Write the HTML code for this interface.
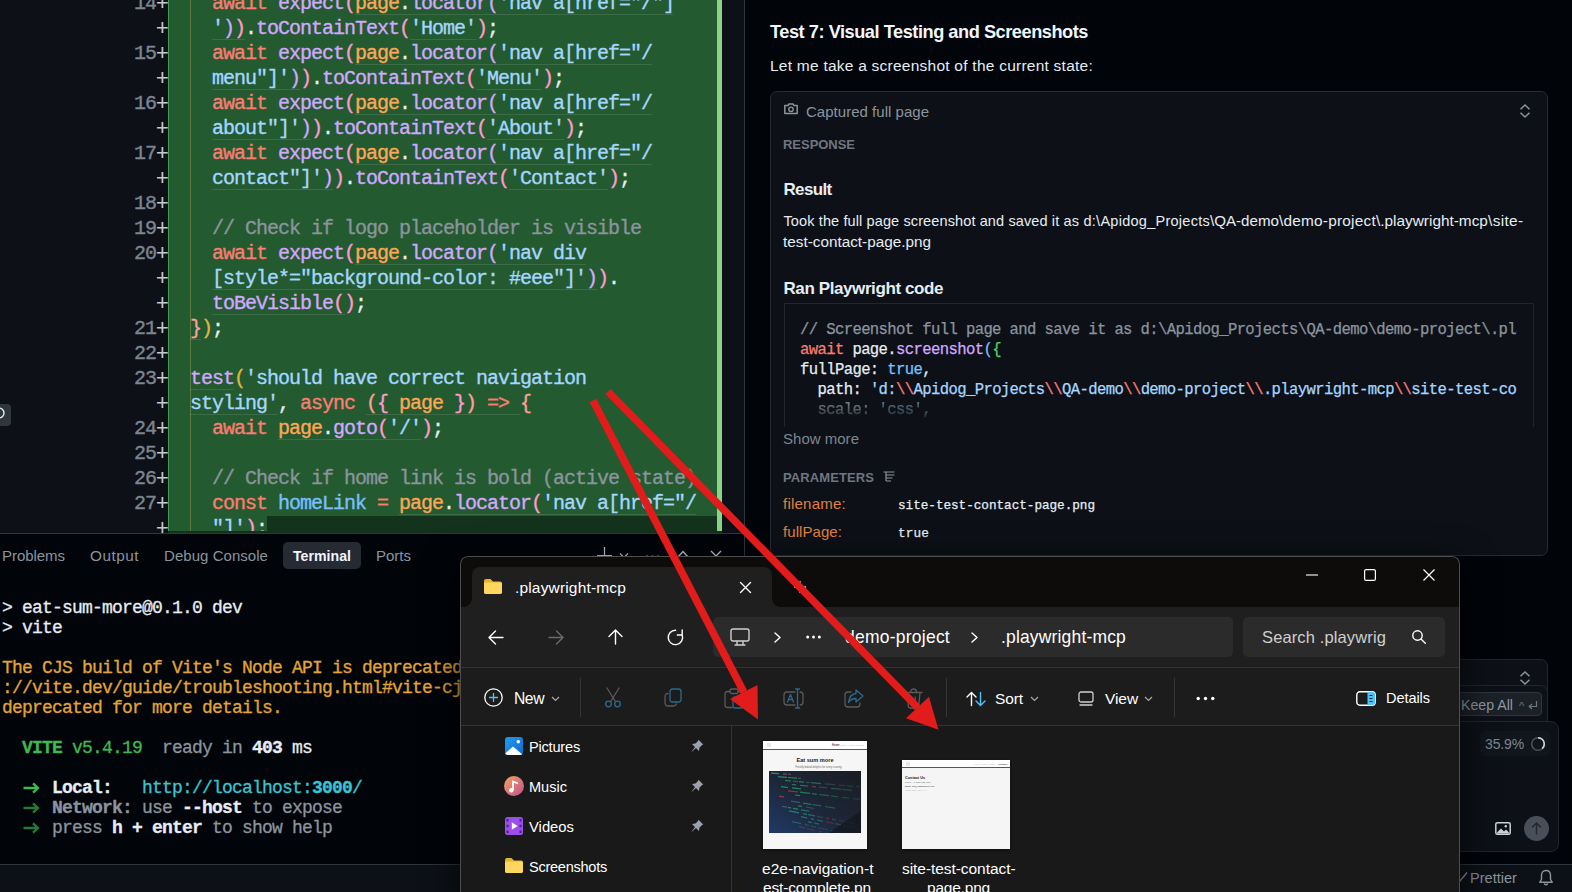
<!DOCTYPE html>
<html lang="en"><head><meta charset="utf-8"><title>Editor</title>
<style>

*{box-sizing:border-box;margin:0;padding:0}
html,body{width:1572px;height:892px;overflow:hidden;background:#010409}
body{position:relative;font-family:"Liberation Sans",sans-serif}
.t{position:absolute;white-space:pre;display:block}
.a{position:absolute}
.code{font:400 20px/25px "Liberation Mono",monospace;letter-spacing:-1.002px;white-space:pre;color:#e6edf3;-webkit-text-stroke:.35px currentColor;margin-top:1px}
.term{font:400 18px/20px "Liberation Mono",monospace;letter-spacing:-.802px;white-space:pre;color:#e6edf3;-webkit-text-stroke:.3px currentColor;margin-top:1px}
.cc{font:400 15.6px/20px "Liberation Mono",monospace;letter-spacing:-.625px;white-space:pre;color:#e6edf3;-webkit-text-stroke:.25px currentColor;margin-top:1px}
b{font-weight:700}
.pl{display:inline-block;width:11px;letter-spacing:0;margin-left:1px;font-size:22px;line-height:20px;-webkit-text-stroke:0;color:#c3cad2;text-indent:-1.2px;vertical-align:-1px}
svg{position:absolute;overflow:visible}

</style></head>
<body>
<div class="a" style="left:0;top:0;width:744px;height:533px;background:#0d1117;overflow:hidden">
<div class="a" style="left:168px;top:0;width:549px;height:532px;background:#235a30"></div>
<div class="a" style="left:168px;top:0;width:1px;height:532px;background:#3f9c55"></div>
<div class="a" style="left:717px;top:0;width:5px;height:532px;background:#8bd485"></div>
<div class="a" style="left:190px;top:0;width:1px;height:532px;background:#5d7d3f"></div>
<div class="a code" style="left:60px;width:108px;top:-10px;text-align:right"><span style="color:#7d8590">14</span><span class="pl">+</span></div><div class="a code" style="left:212px;top:-10px"><span style="color:#ff7b72">await</span><span style="color:#e6edf3"> </span><span style="color:#d2a8ff">expect</span><span style="color:#ff9bce">(</span><span style="color:#ffa657">page</span><span style="color:#e6edf3">.</span><span style="color:#d2a8ff">locator</span><span style="color:#d2a8ff">(</span><span style="color:#a5d6ff">'nav a[href=&quot;/&quot;]</span></div>
<div class="a code" style="left:60px;width:108px;top:15px;text-align:right"><span class="pl">+</span></div><div class="a code" style="left:212px;top:15px"><span style="color:#a5d6ff">'</span><span style="color:#d2a8ff">)</span><span style="color:#ff9bce">)</span><span style="color:#e6edf3">.</span><span style="color:#d2a8ff">toContainText</span><span style="color:#ff9bce">(</span><span style="color:#a5d6ff">'Home'</span><span style="color:#ff9bce">)</span><span style="color:#e6edf3">;</span></div>
<div class="a code" style="left:60px;width:108px;top:40px;text-align:right"><span style="color:#7d8590">15</span><span class="pl">+</span></div><div class="a code" style="left:212px;top:40px"><span style="color:#ff7b72">await</span><span style="color:#e6edf3"> </span><span style="color:#d2a8ff">expect</span><span style="color:#ff9bce">(</span><span style="color:#ffa657">page</span><span style="color:#e6edf3">.</span><span style="color:#d2a8ff">locator</span><span style="color:#d2a8ff">(</span><span style="color:#a5d6ff">'nav a[href=&quot;/</span></div>
<div class="a code" style="left:60px;width:108px;top:65px;text-align:right"><span class="pl">+</span></div><div class="a code" style="left:212px;top:65px"><span style="color:#a5d6ff">menu&quot;]'</span><span style="color:#d2a8ff">)</span><span style="color:#ff9bce">)</span><span style="color:#e6edf3">.</span><span style="color:#d2a8ff">toContainText</span><span style="color:#ff9bce">(</span><span style="color:#a5d6ff">'Menu'</span><span style="color:#ff9bce">)</span><span style="color:#e6edf3">;</span></div>
<div class="a code" style="left:60px;width:108px;top:90px;text-align:right"><span style="color:#7d8590">16</span><span class="pl">+</span></div><div class="a code" style="left:212px;top:90px"><span style="color:#ff7b72">await</span><span style="color:#e6edf3"> </span><span style="color:#d2a8ff">expect</span><span style="color:#ff9bce">(</span><span style="color:#ffa657">page</span><span style="color:#e6edf3">.</span><span style="color:#d2a8ff">locator</span><span style="color:#d2a8ff">(</span><span style="color:#a5d6ff">'nav a[href=&quot;/</span></div>
<div class="a code" style="left:60px;width:108px;top:115px;text-align:right"><span class="pl">+</span></div><div class="a code" style="left:212px;top:115px"><span style="color:#a5d6ff">about&quot;]'</span><span style="color:#d2a8ff">)</span><span style="color:#ff9bce">)</span><span style="color:#e6edf3">.</span><span style="color:#d2a8ff">toContainText</span><span style="color:#ff9bce">(</span><span style="color:#a5d6ff">'About'</span><span style="color:#ff9bce">)</span><span style="color:#e6edf3">;</span></div>
<div class="a code" style="left:60px;width:108px;top:140px;text-align:right"><span style="color:#7d8590">17</span><span class="pl">+</span></div><div class="a code" style="left:212px;top:140px"><span style="color:#ff7b72">await</span><span style="color:#e6edf3"> </span><span style="color:#d2a8ff">expect</span><span style="color:#ff9bce">(</span><span style="color:#ffa657">page</span><span style="color:#e6edf3">.</span><span style="color:#d2a8ff">locator</span><span style="color:#d2a8ff">(</span><span style="color:#a5d6ff">'nav a[href=&quot;/</span></div>
<div class="a code" style="left:60px;width:108px;top:165px;text-align:right"><span class="pl">+</span></div><div class="a code" style="left:212px;top:165px"><span style="color:#a5d6ff">contact&quot;]'</span><span style="color:#d2a8ff">)</span><span style="color:#ff9bce">)</span><span style="color:#e6edf3">.</span><span style="color:#d2a8ff">toContainText</span><span style="color:#ff9bce">(</span><span style="color:#a5d6ff">'Contact'</span><span style="color:#ff9bce">)</span><span style="color:#e6edf3">;</span></div>
<div class="a code" style="left:60px;width:108px;top:190px;text-align:right"><span style="color:#7d8590">18</span><span class="pl">+</span></div><div class="a code" style="left:60px;width:108px;top:215px;text-align:right"><span style="color:#7d8590">19</span><span class="pl">+</span></div><div class="a code" style="left:212px;top:215px"><span style="color:#8b949e">// Check if logo placeholder is visible</span></div>
<div class="a code" style="left:60px;width:108px;top:240px;text-align:right"><span style="color:#7d8590">20</span><span class="pl">+</span></div><div class="a code" style="left:212px;top:240px"><span style="color:#ff7b72">await</span><span style="color:#e6edf3"> </span><span style="color:#d2a8ff">expect</span><span style="color:#ff9bce">(</span><span style="color:#ffa657">page</span><span style="color:#e6edf3">.</span><span style="color:#d2a8ff">locator</span><span style="color:#d2a8ff">(</span><span style="color:#a5d6ff">'nav div</span></div>
<div class="a code" style="left:60px;width:108px;top:265px;text-align:right"><span class="pl">+</span></div><div class="a code" style="left:212px;top:265px"><span style="color:#a5d6ff">[style*=&quot;background-color: #eee&quot;]'</span><span style="color:#d2a8ff">)</span><span style="color:#ff9bce">)</span><span style="color:#e6edf3">.</span></div>
<div class="a code" style="left:60px;width:108px;top:290px;text-align:right"><span class="pl">+</span></div><div class="a code" style="left:212px;top:290px"><span style="color:#d2a8ff">toBeVisible</span><span style="color:#ff9bce">()</span><span style="color:#e6edf3">;</span></div>
<div class="a code" style="left:60px;width:108px;top:315px;text-align:right"><span style="color:#7d8590">21</span><span class="pl">+</span></div><div class="a code" style="left:190px;top:315px"><span style="color:#ffa198">}</span><span style="color:#e3b341">)</span><span style="color:#e6edf3">;</span></div>
<div class="a code" style="left:60px;width:108px;top:340px;text-align:right"><span style="color:#7d8590">22</span><span class="pl">+</span></div><div class="a code" style="left:60px;width:108px;top:365px;text-align:right"><span style="color:#7d8590">23</span><span class="pl">+</span></div><div class="a code" style="left:190px;top:365px"><span style="color:#d2a8ff">test</span><span style="color:#e3b341">(</span><span style="color:#a5d6ff">'should have correct navigation</span></div>
<div class="a code" style="left:60px;width:108px;top:390px;text-align:right"><span class="pl">+</span></div><div class="a code" style="left:190px;top:390px"><span style="color:#a5d6ff">styling'</span><span style="color:#e6edf3">, </span><span style="color:#ff7b72">async</span><span style="color:#e6edf3"> </span><span style="color:#ffa198">(</span><span style="color:#ff9bce">{</span><span style="color:#ffa657"> page </span><span style="color:#ff9bce">}</span><span style="color:#ffa198">)</span><span style="color:#ff7b72"> =&gt;</span><span style="color:#e6edf3"> </span><span style="color:#ffa198">{</span></div>
<div class="a code" style="left:60px;width:108px;top:415px;text-align:right"><span style="color:#7d8590">24</span><span class="pl">+</span></div><div class="a code" style="left:212px;top:415px"><span style="color:#ff7b72">await</span><span style="color:#e6edf3"> </span><span style="color:#ffa657">page</span><span style="color:#e6edf3">.</span><span style="color:#d2a8ff">goto</span><span style="color:#ff9bce">(</span><span style="color:#a5d6ff">'/'</span><span style="color:#ff9bce">)</span><span style="color:#e6edf3">;</span></div>
<div class="a code" style="left:60px;width:108px;top:440px;text-align:right"><span style="color:#7d8590">25</span><span class="pl">+</span></div><div class="a code" style="left:60px;width:108px;top:465px;text-align:right"><span style="color:#7d8590">26</span><span class="pl">+</span></div><div class="a code" style="left:212px;top:465px"><span style="color:#8b949e">// Check if home link is bold (active state)</span></div>
<div class="a code" style="left:60px;width:108px;top:490px;text-align:right"><span style="color:#7d8590">27</span><span class="pl">+</span></div><div class="a code" style="left:212px;top:490px"><span style="color:#ff7b72">const</span><span style="color:#e6edf3"> </span><span style="color:#79c0ff">homeLink</span><span style="color:#e6edf3"> </span><span style="color:#ff7b72">=</span><span style="color:#e6edf3"> </span><span style="color:#ffa657">page</span><span style="color:#e6edf3">.</span><span style="color:#d2a8ff">locator</span><span style="color:#ff9bce">(</span><span style="color:#a5d6ff">'nav a[href=&quot;/</span></div>
<div class="a code" style="left:60px;width:108px;top:515px;text-align:right"><span class="pl">+</span></div><div class="a code" style="left:212px;top:515px"><span style="color:#a5d6ff">&quot;]'</span><span style="color:#ff9bce">)</span><span style="color:#e6edf3">;</span></div>
<div class="a" style="left:355px;top:14px;width:318px;height:1px;background:rgba(255,255,255,.11)"></div><div class="a" style="left:212px;top:39px;width:33px;height:1px;background:rgba(255,255,255,.11)"></div><div class="a" style="left:410px;top:39px;width:66px;height:1px;background:rgba(255,255,255,.11)"></div><div class="a" style="left:355px;top:64px;width:297px;height:1px;background:rgba(255,255,255,.11)"></div><div class="a" style="left:212px;top:89px;width:88px;height:1px;background:rgba(255,255,255,.11)"></div><div class="a" style="left:476px;top:89px;width:66px;height:1px;background:rgba(255,255,255,.11)"></div><div class="a" style="left:355px;top:114px;width:297px;height:1px;background:rgba(255,255,255,.11)"></div><div class="a" style="left:212px;top:139px;width:99px;height:1px;background:rgba(255,255,255,.11)"></div><div class="a" style="left:487px;top:139px;width:77px;height:1px;background:rgba(255,255,255,.11)"></div><div class="a" style="left:355px;top:164px;width:297px;height:1px;background:rgba(255,255,255,.11)"></div><div class="a" style="left:212px;top:189px;width:121px;height:1px;background:rgba(255,255,255,.11)"></div><div class="a" style="left:509px;top:189px;width:99px;height:1px;background:rgba(255,255,255,.11)"></div><div class="a" style="left:355px;top:264px;width:231px;height:1px;background:rgba(255,255,255,.11)"></div><div class="a" style="left:212px;top:289px;width:385px;height:1px;background:rgba(255,255,255,.11)"></div><div class="a" style="left:212px;top:314px;width:133px;height:1px;background:rgba(255,255,255,.11)"></div><div class="a" style="left:190px;top:389px;width:44px;height:1px;background:rgba(255,255,255,.11)"></div><div class="a" style="left:190px;top:414px;width:88px;height:1px;background:rgba(255,255,255,.11)"></div><div class="a" style="left:366px;top:414px;width:154px;height:1px;background:rgba(255,255,255,.11)"></div><div class="a" style="left:278px;top:439px;width:143px;height:1px;background:rgba(255,255,255,.11)"></div><div class="a" style="left:399px;top:514px;width:297px;height:1px;background:rgba(255,255,255,.11)"></div><div class="a" style="left:190px;top:339px;width:11px;height:1px;background:rgba(255,255,255,.11)"></div>
<div class="a" style="left:267px;top:516px;width:450px;height:16px;background:rgba(10,20,14,.55)"></div>
<div class="a" style="left:168px;top:531px;width:554px;height:2px;background:#15301f"></div>
<div class="a" style="left:-4px;top:404px;width:15px;height:22px;border-radius:4px;background:#30363d"></div><svg style="left:0;top:404px" width="11" height="22"><circle cx="-1" cy="9" r="5" fill="none" stroke="#e6edf3" stroke-width="1.4"/></svg>
</div>
<div class="a" style="left:744px;top:0;width:1px;height:892px;background:#30363d"></div>
<div class="a" style="left:0;top:533px;width:744px;height:332px;background:#010409;border-top:1px solid #30363d;overflow:hidden"></div>
<div class="a" style="left:283px;top:542px;width:78px;height:27px;border-radius:5px;background:#262b33"></div>
<span class="t" style='left:2px;top:545.5px;font:400 15px/20px "Liberation Sans", sans-serif;color:#8b949e;letter-spacing:-0.045px;'>Problems</span><span class="t" style='left:90px;top:545.5px;font:400 15.3px/20px "Liberation Sans", sans-serif;color:#8b949e;letter-spacing:0.513px;'>Output</span><span class="t" style='left:164px;top:545.5px;font:400 15px/20px "Liberation Sans", sans-serif;color:#8b949e;letter-spacing:0.046px;'>Debug Console</span><span class="t" style='left:293px;top:546.5px;font:700 14.17px/18px "Liberation Sans", sans-serif;color:#f0f6fc;letter-spacing:0.000px;'>Terminal</span><span class="t" style='left:376px;top:545.5px;font:400 15px/20px "Liberation Sans", sans-serif;color:#8b949e;letter-spacing:-0.003px;'>Ports</span><div class="a term" style="left:2px;top:597px;width:458px;overflow:hidden">&gt; eat-sum-more@0.1.0 dev</div>
<div class="a term" style="left:2px;top:617px;width:458px;overflow:hidden">&gt; vite</div>
<div class="a term" style="left:2px;top:657px;width:458px;overflow:hidden"><span style="color:#e3a536">The CJS build of Vite's Node API is deprecated. See https</span></div>
<div class="a term" style="left:2px;top:677px;width:458px;overflow:hidden"><span style="color:#e3a536">://vite.dev/guide/troubleshooting.html#vite-cjs-node-api-</span></div>
<div class="a term" style="left:2px;top:697px;width:458px;overflow:hidden"><span style="color:#e3a536">deprecated for more details.</span></div>
<div class="a term" style="left:2px;top:737px;width:458px;overflow:hidden">  <b style="color:#3fb950">VITE</b><span style="color:#3fb950"> v5.4.19</span>  <span style="color:#8b949e">ready in</span> <b>403</b> ms</div>
<svg style="left:23px;top:782px" width="17" height="12" viewBox="0 0 17 12"><path d="M0.5 6H14.5M10 1.3L15 6L10 10.7" stroke="#3fb950" stroke-width="2.3" fill="none"/></svg>
<svg style="left:23px;top:802px" width="17" height="12" viewBox="0 0 17 12"><path d="M0.5 6H14.5M10 1.3L15 6L10 10.7" stroke="#277a35" stroke-width="2.3" fill="none"/></svg>
<svg style="left:23px;top:822px" width="17" height="12" viewBox="0 0 17 12"><path d="M0.5 6H14.5M10 1.3L15 6L10 10.7" stroke="#277a35" stroke-width="2.3" fill="none"/></svg>
<div class="a term" style="left:2px;top:777px;width:458px;overflow:hidden">  <span style="color:#3fb950;opacity:0">→</span>  <b>Local:</b>   <span style="color:#39c5cf">http://localhost:<b>3000</b>/</span></div>
<div class="a term" style="left:2px;top:797px;width:458px;overflow:hidden">  <span style="color:#3fb950;opacity:0">→</span>  <b style="color:#8b949e">Network:</b><span style="color:#8b949e"> use </span><b>--host</b><span style="color:#8b949e"> to expose</span></div>
<div class="a term" style="left:2px;top:817px;width:458px;overflow:hidden">  <span style="color:#3fb950;opacity:0">→</span>  <span style="color:#8b949e">press </span><b>h + enter</b><span style="color:#8b949e"> to show help</span></div>
<svg style="left:596px;top:546px" width="17" height="17" viewBox="0 0 17 17"><path d="M8.5 1V16M1 9.5H16" stroke="#c9d1d9" stroke-width="1.2" fill="none"/></svg>
<svg style="left:619px;top:553px" width="10" height="6" viewBox="0 0 10 6"><path d="M1 0.5L5 4.5L9 0.5" stroke="#c9d1d9" stroke-width="1.2" fill="none"/></svg>
<svg style="left:645px;top:554.5px" width="15" height="4" viewBox="0 0 15 4"><circle cx="2" cy="2" r="1.4" fill="#c9d1d9"/><circle cx="7.5" cy="2" r="1.4" fill="#c9d1d9"/><circle cx="13" cy="2" r="1.4" fill="#c9d1d9"/></svg>
<svg style="left:677px;top:550px" width="12" height="8" viewBox="0 0 12 8"><path d="M1 7L6 1.5L11 7" stroke="#c9d1d9" stroke-width="1.4" fill="none"/></svg>
<svg style="left:710px;top:550px" width="12" height="12" viewBox="0 0 12 12"><path d="M1 1L11 11M11 1L1 11" stroke="#c9d1d9" stroke-width="1.4" fill="none"/></svg>
<div class="a" style="left:0;top:864px;width:1572px;height:28px;background:#0d1117;border-top:1px solid #30363d"></div>
<span class="t" style='left:770px;top:19.5px;font:700 18.2px/24px "Liberation Sans", sans-serif;color:#f0f6fc;letter-spacing:-0.462px;'>Test 7: Visual Testing and Screenshots</span><span class="t" style='left:770px;top:55.5px;font:400 15.5px/20px "Liberation Sans", sans-serif;color:#e6edf3;letter-spacing:0.241px;'>Let me take a screenshot of the current state:</span><div class="a" style="left:770px;top:91px;width:778px;height:465px;background:#0d1117;border:1px solid #272c34;border-radius:7px"></div>
<svg style="left:784px;top:103px" width="15" height="12" viewBox="0 0 15 12"><path d="M0.8 2.6H4L5 0.9H9L10 2.6H13.2V10.4H0.8Z" fill="none" stroke="#8b949e" stroke-width="1.5" stroke-linejoin="round"/><circle cx="7" cy="6.3" r="2.2" fill="none" stroke="#8b949e" stroke-width="1.4"/></svg>
<span class="t" style='left:806px;top:101.5px;font:400 15px/20px "Liberation Sans", sans-serif;color:#8b949e;letter-spacing:0.023px;'>Captured full page</span><svg style="left:1519px;top:103.5px" width="12" height="14" viewBox="0 0 12 14"><path d="M1.5 5.2L6 1L10.5 5.2M1.5 8.8L6 13L10.5 8.8" stroke="#8b949e" stroke-width="1.5" fill="none"/></svg>
<span class="t" style='left:783px;top:135.5px;font:700 13px/17px "Liberation Sans", sans-serif;color:#6e7681;letter-spacing:-0.031px;'>RESPONSE</span><span class="t" style='left:783.5px;top:178.5px;font:700 17px/22px "Liberation Sans", sans-serif;color:#e6edf3;letter-spacing:-0.661px;'>Result</span><span class="t" style='left:783.5px;top:211.5px;font:400 14.5px/19px "Liberation Sans", sans-serif;color:#e6edf3;letter-spacing:0.118px;'>Took the full page screenshot and saved it as</span><span class="t" style='left:1083.5px;top:211.5px;font:400 14.5px/19px "Liberation Sans", sans-serif;color:#e6edf3;letter-spacing:0.266px;'>d:\Apidog_Projects</span><span class="t" style='left:1210px;top:211px;font:400 15.14px/20px "Liberation Sans", sans-serif;color:#e6edf3;letter-spacing:0.000px;'>\QA-demo</span><span class="t" style='left:1279px;top:211px;font:400 15.37px/20px "Liberation Sans", sans-serif;color:#e6edf3;letter-spacing:0.233px;'>\demo-project</span><span class="t" style='left:1376px;top:211px;font:400 15.37px/20px "Liberation Sans", sans-serif;color:#e6edf3;letter-spacing:0.006px;'>\.playwright-mcp</span><span class="t" style='left:1488px;top:211px;font:400 15.37px/20px "Liberation Sans", sans-serif;color:#e6edf3;letter-spacing:0.365px;'>\site-</span><span class="t" style='left:783px;top:232px;font:400 15.3px/20px "Liberation Sans", sans-serif;color:#e6edf3;letter-spacing:0.000px;'>test-contact-page.png</span><span class="t" style='left:783.5px;top:277.5px;font:700 17px/22px "Liberation Sans", sans-serif;color:#e6edf3;letter-spacing:-0.405px;'>Ran Playwright code</span><div class="a" style="left:784px;top:303px;width:750px;height:124px;background:#0d1117;border:1px solid #21262d;border-bottom:none;overflow:hidden"><div class="a cc" style="left:15px;top:15px;width:717px;overflow:hidden;opacity:1"><span style="color:#8b949e">// Screenshot full page and save it as d:\Apidog_Projects\QA-demo\demo-project\.playwright-mcp\site-test</span></div><div class="a cc" style="left:15px;top:35px;width:717px;overflow:hidden;opacity:1"><span style="color:#ff7b72">await</span> page.<span style="color:#d2a8ff">screenshot</span><span style="color:#79c0ff">(</span><span style="color:#56d364">{</span></div><div class="a cc" style="left:15px;top:55px;width:717px;overflow:hidden;opacity:1">fullPage: <span style="color:#79c0ff">true</span>,</div><div class="a cc" style="left:15px;top:75px;width:717px;overflow:hidden;opacity:1">  path: <span style="color:#a5d6ff">'d:<span style="color:#ff7b72">\\</span>Apidog_Projects<span style="color:#ff7b72">\\</span>QA-demo<span style="color:#ff7b72">\\</span>demo-project<span style="color:#ff7b72">\\</span>.playwright-mcp<span style="color:#ff7b72">\\</span>site-test-contact-page.png'</span>,</div><div class="a cc" style="left:15px;top:95px;width:717px;overflow:hidden;opacity:0.55">  scale: <span style="color:#a5d6ff">'css'</span>,</div><div class="a cc" style="left:15px;top:115px;width:717px;overflow:hidden;opacity:0.2">  type: <span style="color:#a5d6ff">'png'</span></div><div class="a" style="left:0;top:96px;width:750px;height:28px;background:linear-gradient(rgba(13,17,23,0),#0d1117 85%)"></div></div>
<span class="t" style='left:783px;top:429px;font:400 15px/20px "Liberation Sans", sans-serif;color:#7d8590;letter-spacing:0.014px;'>Show more</span><span class="t" style='left:783px;top:468.5px;font:700 13px/17px "Liberation Sans", sans-serif;color:#6e7681;letter-spacing:0.095px;'>PARAMETERS</span><svg style="left:883px;top:471px" width="12" height="11" viewBox="0 0 12 11"><path d="M0.5 1H11.5M3 4H11.5M3 7H9.5M3 10H8" stroke="#8b949e" stroke-width="1.2" fill="none"/><path d="M3 1V10" stroke="#8b949e" stroke-width="1.2"/></svg>
<span class="t" style='left:783px;top:494px;font:400 15px/20px "Liberation Sans", sans-serif;color:#e0823d;letter-spacing:0.236px;'>filename:</span><span class="t" style='left:898px;top:496.5px;font:400 12.7px/17px "Liberation Mono", monospace;color:#e6edf3;letter-spacing:-0.037px;-webkit-text-stroke:.25px #e6edf3;'>site-test-contact-page.png</span><span class="t" style='left:783px;top:522px;font:400 15px/20px "Liberation Sans", sans-serif;color:#e0823d;letter-spacing:0.069px;'>fullPage:</span><span class="t" style='left:898px;top:524.5px;font:400 12.7px/17px "Liberation Mono", monospace;color:#e6edf3;letter-spacing:0.133px;-webkit-text-stroke:.25px #e6edf3;'>true</span><div class="a" style="left:1380px;top:659px;width:168px;height:40px;background:#0d1117;border:1px solid #21262d;border-radius:7px"></div>
<svg style="left:1519px;top:671px" width="12" height="14" viewBox="0 0 12 14"><path d="M1.5 5.2L6 1L10.5 5.2M1.5 8.8L6 13L10.5 8.8" stroke="#8b949e" stroke-width="1.5" fill="none"/></svg>
<div class="a" style="left:1380px;top:685px;width:168px;height:40px;background:#0d1117;border:1px solid #21262d;border-radius:7px 7px 0 0"></div>
<div class="a" style="left:1440px;top:692px;width:102px;height:24px;background:#1c2128;border:1px solid #30363d;border-radius:4px"></div>
<span class="t" style='left:1461px;top:696px;font:400 14.17px/18px "Liberation Sans", sans-serif;color:#9198a1;letter-spacing:0.000px;'>Keep All</span><span class="t" style='left:1519px;top:699px;font:400 11px/14px "Liberation Sans", sans-serif;color:#6e7681;letter-spacing:3.828px;'>^</span><svg style="left:1527px;top:700px" width="11" height="10" viewBox="0 0 11 10"><path d="M9.5 1V6.5H2.5M5 4L2.3 6.5L5 9" stroke="#6e7681" stroke-width="1.2" fill="none"/></svg>
<div class="a" style="left:1380px;top:721px;width:179px;height:131px;background:#0d1117;border:1px solid #21262d;border-radius:8px"></div>
<div class="a" style="left:1480px;top:731px;width:70px;height:25px;background:#11161d;border-radius:5px"></div>
<span class="t" style='left:1485px;top:735px;font:400 14px/18px "Liberation Sans", sans-serif;color:#7d8590;letter-spacing:-0.141px;'>35.9%</span><svg style="left:1529px;top:735px" width="18" height="18" viewBox="0 0 18 18"><circle cx="9" cy="9" r="6.3" fill="none" stroke="#484f58" stroke-width="1.6"/><path d="M9 2.7A6.3 6.3 0 0 1 15.3 9A6.3 6.3 0 0 1 13.2 13.7" fill="none" stroke="#d0d7de" stroke-width="1.6"/></svg>
<svg style="left:1495px;top:822px" width="16" height="13" viewBox="0 0 16 13"><rect x="0.8" y="0.8" width="14.4" height="11.4" rx="1.5" fill="none" stroke="#c9d1d9" stroke-width="1.5"/><path d="M2 10.5L6 6.5L9 9.5L11 7.5L14 10.5V11.5H2Z" fill="#c9d1d9"/><circle cx="10.8" cy="4.3" r="1.2" fill="#c9d1d9"/></svg>
<div class="a" style="left:1524px;top:816px;width:25px;height:25px;border-radius:50%;background:#484f58"></div>
<svg style="left:1524px;top:816px" width="25" height="25" viewBox="0 0 25 25"><path d="M12.5 18.5V7.5M8 11.5L12.5 7L17 11.5" stroke="#24292f" stroke-width="1.5" fill="none"/></svg>
<svg style="left:1456px;top:871px" width="12" height="12" viewBox="0 0 12 12"><path d="M1 6.5L4 10L11 1.5" stroke="#8b949e" stroke-width="1.4" fill="none"/></svg>
<span class="t" style='left:1470px;top:868.5px;font:400 14.5px/19px "Liberation Sans", sans-serif;color:#8b949e;letter-spacing:0.031px;'>Prettier</span><svg style="left:1538px;top:869px" width="16" height="18" viewBox="0 0 16 18"><path d="M8 1.5C5 1.5 3.5 3.8 3.5 6.5V10.5L1.8 13.2H14.2L12.5 10.5V6.5C12.5 3.8 11 1.5 8 1.5Z" fill="none" stroke="#8b949e" stroke-width="1.4" stroke-linejoin="round"/><path d="M6.3 14.5A1.8 1.8 0 0 0 9.7 14.5" fill="none" stroke="#8b949e" stroke-width="1.4"/></svg>
<div class="a" style="left:460px;top:556px;width:1000px;height:346px;background:#0d0c0b;border-radius:8px 8px 0 0;overflow:hidden;box-shadow:0 10px 32px 6px rgba(0,0,0,.6)">
<div class="a" style="left:0;top:1px;width:1000px;height:345px;background:#1f1f1f">
<div class="a" style="left:0;top:0;width:1000px;height:50px;background:#0d0c0b"></div>
<div class="a" style="left:12px;top:10px;width:300px;height:40px;background:#1f1f1f;border-radius:8px 8px 0 0"></div>
<div class="a" style="left:4px;top:42px;width:8px;height:8px;background:radial-gradient(circle at 0 0,#0d0c0b 7.5px,#1f1f1f 8px)"></div>
<div class="a" style="left:312px;top:42px;width:8px;height:8px;background:radial-gradient(circle at 100% 0,#0d0c0b 7.5px,#1f1f1f 8px)"></div>
<div class="a" style="left:0;top:110px;width:1000px;height:1px;background:#333"></div>
<div class="a" style="left:0;top:168px;width:1000px;height:1px;background:#333"></div>
<div class="a" style="left:253px;top:60px;width:520px;height:40px;background:#2b2b2b;border-radius:5px"></div>
<div class="a" style="left:783px;top:60px;width:202px;height:40px;background:#2b2b2b;border-radius:5px"></div>
<div class="a" style="left:0;top:111px;width:1000px;height:57px;background:#1c1c1c"></div>
    <div class="a" style="left:0;top:169px;width:1000px;height:180px;background:#191919"></div>
<div class="a" style="left:271px;top:169px;width:1px;height:180px;background:#333"></div>
<div class="a" style="left:120px;top:121px;width:1px;height:39px;background:#353535"></div>
<div class="a" style="left:486px;top:121px;width:1px;height:39px;background:#353535"></div>
<div class="a" style="left:714px;top:121px;width:1px;height:39px;background:#353535"></div>
</div>
<div class="a" style="left:0;top:0;width:1000px;height:347px;border:1px solid #4d4d4d;border-bottom:none;border-radius:8px 8px 0 0"></div>
</div>
<span class="t" style='left:515px;top:577.5px;font:400 15.5px/20px "Liberation Sans", sans-serif;color:#ffffff;letter-spacing:0.165px;'>.playwright-mcp</span><span class="t" style='left:845px;top:625.5px;font:400 17.49px/23px "Liberation Sans", sans-serif;color:#ffffff;letter-spacing:0.244px;'>demo-project</span><span class="t" style='left:1001px;top:625.5px;font:400 17.49px/23px "Liberation Sans", sans-serif;color:#ffffff;letter-spacing:0.168px;'>.playwright-mcp</span><span class="t" style='left:1262px;top:626.5px;font:400 16.5px/21px "Liberation Sans", sans-serif;color:#cfcfcf;letter-spacing:0.126px;'>Search .playwrig</span><span class="t" style='left:514px;top:688.5px;font:400 15.7px/20px "Liberation Sans", sans-serif;color:#ffffff;letter-spacing:-0.464px;'>New</span><span class="t" style='left:995px;top:688.5px;font:400 15.5px/20px "Liberation Sans", sans-serif;color:#ffffff;letter-spacing:-0.109px;'>Sort</span><span class="t" style='left:1105px;top:688.5px;font:400 15.5px/20px "Liberation Sans", sans-serif;color:#ffffff;letter-spacing:-0.082px;'>View</span><span class="t" style='left:1386px;top:689px;font:400 14.57px/19px "Liberation Sans", sans-serif;color:#ffffff;letter-spacing:-0.078px;'>Details</span><span class="t" style='left:529px;top:738px;font:400 14.57px/19px "Liberation Sans", sans-serif;color:#ffffff;letter-spacing:-0.205px;'>Pictures</span><span class="t" style='left:529px;top:778px;font:400 14.57px/19px "Liberation Sans", sans-serif;color:#ffffff;letter-spacing:-0.011px;'>Music</span><span class="t" style='left:529px;top:818px;font:400 14.8px/19px "Liberation Sans", sans-serif;color:#ffffff;letter-spacing:0.000px;'>Videos</span><span class="t" style='left:529px;top:858px;font:400 14.57px/19px "Liberation Sans", sans-serif;color:#ffffff;letter-spacing:-0.273px;'>Screenshots</span><span class="t" style='left:762px;top:859px;font:400 15.5px/20px "Liberation Sans", sans-serif;color:#ffffff;letter-spacing:0.021px;'>e2e-navigation-t</span><span class="t" style='left:763px;top:878px;font:400 15.5px/20px "Liberation Sans", sans-serif;color:#ffffff;letter-spacing:-0.152px;'>est-complete.pn</span><span class="t" style='left:902px;top:859px;font:400 15.5px/20px "Liberation Sans", sans-serif;color:#ffffff;letter-spacing:-0.059px;'>site-test-contact-</span><span class="t" style='left:927px;top:878px;font:400 15.5px/20px "Liberation Sans", sans-serif;color:#ffffff;letter-spacing:-0.207px;'>page.png</span><svg style="left:484px;top:579px" width="18" height="15" viewBox="0 0 18 15"><path d="M0 2C0 .9 .9 0 2 0H6.5L9 2.5H16C17.1 2.5 18 3.4 18 4.5V13C18 14.1 17.1 15 16 15H2C.9 15 0 14.1 0 13Z" fill="#e8b12f"/><path d="M0 5C0 4.2 .7 3.5 1.5 3.5H16.5C17.3 3.5 18 4.2 18 5V13C18 14.1 17.1 15 16 15H2C.9 15 0 14.1 0 13Z" fill="#ffd75e"/></svg>
<svg style="left:740px;top:582px" width="11" height="11" viewBox="0 0 11 11"><path d="M0.5 0.5L10.5 10.5M10.5 0.5L0.5 10.5" stroke="#fff" stroke-width="1.4" fill="none" stroke-linecap="round" stroke-linejoin="round"/></svg>
<svg style="left:794px;top:581px" width="12" height="12" viewBox="0 0 12 12"><path d="M6 0V12M0 6H12" stroke="#cfcfcf" stroke-width="1.3"/></svg>
<svg style="left:1306px;top:573.5px" width="12" height="2" viewBox="0 0 12 2"><path d="M0 1H12" stroke="#fff" stroke-width="1.1"/></svg>
<svg style="left:1364px;top:569px" width="12" height="12" viewBox="0 0 12 12"><rect x="0.6" y="0.6" width="10.8" height="10.8" rx="1.5" stroke="#fff" stroke-width="1.2" fill="none"/></svg>
<svg style="left:1423px;top:569px" width="12" height="12" viewBox="0 0 12 12"><path d="M0.5 0.5L11.5 11.5M11.5 0.5L0.5 11.5" stroke="#fff" stroke-width="1.2"/></svg>
<svg style="left:488px;top:630px" width="16" height="15" viewBox="0 0 16 15"><path d="M15 7.5H1M7.5 1L1 7.5L7.5 14" stroke="#fff" stroke-width="1.4" fill="none" stroke-linecap="round" stroke-linejoin="round"/></svg>
<svg style="left:548px;top:630px" width="16" height="15" viewBox="0 0 16 15"><path d="M1 7.5H15M8.5 1L15 7.5L8.5 14" stroke="#6a6a6a" stroke-width="1.4" fill="none" stroke-linecap="round" stroke-linejoin="round"/></svg>
<svg style="left:608px;top:629px" width="15" height="16" viewBox="0 0 15 16"><path d="M7.5 15V1M1 7.5L7.5 1L14 7.5" stroke="#fff" stroke-width="1.4" fill="none" stroke-linecap="round" stroke-linejoin="round"/></svg>
<svg style="left:667px;top:629px" width="17" height="17" viewBox="0 0 17 17"><path d="M15.2 6A7.2 7.2 0 1 1 8.6 1.2M15.2 1V6H10.3" stroke="#fff" stroke-width="1.4" fill="none" stroke-linecap="round" stroke-linejoin="round"/></svg>
<svg style="left:730px;top:628px" width="20" height="18" viewBox="0 0 20 18"><rect x="1" y="1" width="18" height="12" rx="2" stroke="#cfcfcf" stroke-width="1.4" fill="none" stroke-linecap="round" stroke-linejoin="round"/><path d="M7 13.5V16.5M13 13.5V16.5M5 17H15" stroke="#cfcfcf" stroke-width="1.4" fill="none" stroke-linecap="round" stroke-linejoin="round"/></svg>
<svg style="left:774px;top:632px" width="7" height="11" viewBox="0 0 7 11"><path d="M1 1L6 5.5L1 10" stroke="#fff" stroke-width="1.4" fill="none" stroke-linecap="round" stroke-linejoin="round"/></svg>
<svg style="left:806px;top:634.5px" width="15" height="4" viewBox="0 0 15 4"><circle cx="1.7" cy="2" r="1.5" fill="#fff"/><circle cx="7.5" cy="2" r="1.5" fill="#fff"/><circle cx="13.3" cy="2" r="1.5" fill="#fff"/></svg>
<svg style="left:971px;top:632px" width="7" height="11" viewBox="0 0 7 11"><path d="M1 1L6 5.5L1 10" stroke="#fff" stroke-width="1.4" fill="none" stroke-linecap="round" stroke-linejoin="round"/></svg>
<svg style="left:1412px;top:630px" width="14" height="14" viewBox="0 0 14 14"><circle cx="5.5" cy="5.5" r="4.7" stroke="#fff" stroke-width="1.4" fill="none" stroke-linecap="round" stroke-linejoin="round"/><path d="M9 9L13.3 13.3" stroke="#fff" stroke-width="1.4" fill="none" stroke-linecap="round" stroke-linejoin="round"/></svg>
<svg style="left:484px;top:687.5px" width="19" height="19" viewBox="0 0 19 19"><circle cx="9.5" cy="9.5" r="8.7" stroke="#fff" stroke-width="1.3" fill="none"/><path d="M9.5 5V14M5 9.5H14" stroke="#4cc2ff" stroke-width="1.3"/></svg>
<svg style="left:551px;top:696px" width="9" height="6" viewBox="0 0 9 6"><path d="M1 1L4.5 4.5L8 1" stroke="#a8a8a8" stroke-width="1.2" fill="none"/></svg>
<svg style="left:1030px;top:696px" width="9" height="6" viewBox="0 0 9 6"><path d="M1 1L4.5 4.5L8 1" stroke="#a8a8a8" stroke-width="1.2" fill="none"/></svg>
<svg style="left:1144px;top:696px" width="9" height="6" viewBox="0 0 9 6"><path d="M1 1L4.5 4.5L8 1" stroke="#a8a8a8" stroke-width="1.2" fill="none"/></svg>
<svg style="left:603px;top:687px" width="20" height="21" viewBox="0 0 20 21"><path d="M4 1L12.3 14.5M16 1L7.7 14.5" stroke="#5a5a5a" stroke-width="1.3" fill="none" stroke-linecap="round" stroke-linejoin="round"/><circle cx="5.5" cy="17" r="2.8" stroke="#2b6a8f" stroke-width="1.3" fill="none" stroke-linecap="round" stroke-linejoin="round"/><circle cx="14.5" cy="17" r="2.8" stroke="#2b6a8f" stroke-width="1.3" fill="none" stroke-linecap="round" stroke-linejoin="round"/></svg>
<svg style="left:664px;top:688px" width="19" height="19" viewBox="0 0 19 19"><rect x="6" y="1" width="11" height="13" rx="2.5" stroke="#2b6a8f" stroke-width="1.3" fill="none" stroke-linecap="round" stroke-linejoin="round"/><path d="M4 5.5C2 5.5 1 6.8 1 8.5V14.5C1 16.5 2.3 18 4.3 18H9.5C11 18 12 17.2 12.3 16" stroke="#5a5a5a" stroke-width="1.3" fill="none" stroke-linecap="round" stroke-linejoin="round"/></svg>
<svg style="left:724px;top:688px" width="20" height="21" viewBox="0 0 20 21"><path d="M6 3.5H3.5C2 3.5 1 4.5 1 6V17C1 18.5 2 19.5 3.5 19.5H8" stroke="#5a5a5a" stroke-width="1.3" fill="none" stroke-linecap="round" stroke-linejoin="round"/><rect x="6" y="1" width="8" height="4.5" rx="1.5" stroke="#5a5a5a" stroke-width="1.3" fill="none" stroke-linecap="round" stroke-linejoin="round"/><path d="M14 3.5H16.5C18 3.5 19 4.5 19 6V8" stroke="#5a5a5a" stroke-width="1.3" fill="none" stroke-linecap="round" stroke-linejoin="round"/><rect x="9" y="9" width="10" height="11" rx="2" stroke="#2b6a8f" stroke-width="1.3" fill="none" stroke-linecap="round" stroke-linejoin="round"/></svg>
<svg style="left:783px;top:688px" width="21" height="21" viewBox="0 0 21 21"><path d="M12 4H4C2.3 4 1 5.3 1 7V14C1 15.7 2.3 17 4 17H12M17 4C18.7 4 20 5.3 20 7V14C20 15.7 18.7 17 17 17" stroke="#5a5a5a" stroke-width="1.3" fill="none" stroke-linecap="round" stroke-linejoin="round"/><path d="M14.5 1V20M12.5 1H16.5M12.5 20H16.5" stroke="#2b6a8f" stroke-width="1.3" fill="none" stroke-linecap="round" stroke-linejoin="round"/><path d="M4.5 14L7.5 6.5L10.5 14M5.5 11.5H9.5" stroke="#2b6a8f" stroke-width="1.3" fill="none" stroke-linecap="round" stroke-linejoin="round"/></svg>
<svg style="left:844px;top:689px" width="20" height="19" viewBox="0 0 20 19"><path d="M7 3H4C2.3 3 1 4.3 1 6V15C1 16.7 2.3 18 4 18H13C14.7 18 16 16.7 16 15V14" stroke="#5a5a5a" stroke-width="1.3" fill="none" stroke-linecap="round" stroke-linejoin="round"/><path d="M12 1L19 7L12 13V9.5C8 9.5 6 11 4.5 13.5C5 8.5 8 5 12 4.5Z" stroke="#2b6a8f" stroke-width="1.3" fill="none" stroke-linecap="round" stroke-linejoin="round"/></svg>
<svg style="left:904px;top:688px" width="19" height="21" viewBox="0 0 19 21"><path d="M1 4.5H18M6.5 4.5C6.5 2.5 7.8 1 9.5 1C11.2 1 12.5 2.5 12.5 4.5M3 4.5L4.3 18C4.4 19.2 5.3 20 6.5 20H12.5C13.7 20 14.6 19.2 14.7 18L16 4.5M7.8 9V15.5M11.2 9V15.5" stroke="#5a5a5a" stroke-width="1.3" fill="none" stroke-linecap="round" stroke-linejoin="round"/></svg>
<svg style="left:966px;top:690.5px" width="20" height="16" viewBox="0 0 20 16"><path d="M5.5 14.5V1.5M1 6L5.5 1.5L10 6" stroke="#fff" stroke-width="1.4" fill="none" stroke-linecap="round" stroke-linejoin="round"/><path d="M14.5 1.5V14.5M10 10L14.5 14.5L19 10" stroke="#4cc2ff" stroke-width="1.4" fill="none" stroke-linecap="round" stroke-linejoin="round"/></svg>
<svg style="left:1078px;top:691px" width="16" height="15" viewBox="0 0 16 15"><rect x="1" y="1" width="14" height="10" rx="2" stroke="#d0d0d0" stroke-width="1.3" fill="none"/><path d="M2 14H14" stroke="#d0d0d0" stroke-width="1.3" stroke-linecap="round"/></svg>
<svg style="left:1196px;top:696px" width="19" height="5" viewBox="0 0 19 5"><circle cx="2.2" cy="2.5" r="1.7" fill="#fff"/><circle cx="9.5" cy="2.5" r="1.7" fill="#fff"/><circle cx="16.8" cy="2.5" r="1.7" fill="#fff"/></svg>
<svg style="left:1356px;top:691px" width="20" height="15" viewBox="0 0 20 15"><rect x="0.8" y="0.8" width="18.4" height="13.4" rx="3" stroke="#fff" stroke-width="1.4" fill="none"/><path d="M11.5 1H16.5C18 1 19 2 19 3.5V11.5C19 13 18 14 16.5 14H11.5Z" fill="#4cc2ff"/><path d="M13.5 4.5H16.5M13.5 7.5H16.5M13.5 10.5H16.5" stroke="#1c1c1c" stroke-width="1"/></svg>
<svg style="left:505px;top:737px" width="18" height="18" viewBox="0 0 18 18"><defs><linearGradient id="pg" x1="0" y1="0" x2="1" y2="1"><stop offset="0" stop-color="#1f9cf0"/><stop offset="1" stop-color="#1668c9"/></linearGradient><clipPath id="pc"><rect width="18" height="18" rx="3"/></clipPath></defs><rect width="18" height="18" rx="3" fill="url(#pg)"/><path d="M0 16.5L8 9.5L18 18H0Z" fill="#fff" clip-path="url(#pc)"/><circle cx="13.3" cy="4.8" r="1.7" fill="#fff"/></svg>
<svg style="left:504px;top:776px" width="20" height="20" viewBox="0 0 20 20"><defs><linearGradient id="mg" x1="0" y1="0" x2="1" y2="1"><stop offset="0" stop-color="#f4a261"/><stop offset="1" stop-color="#c0508f"/></linearGradient></defs><circle cx="10" cy="10" r="10" fill="url(#mg)"/><path d="M9 14.5V5.5L14 7.5" stroke="#fff" stroke-width="1.8" fill="none"/><circle cx="7.3" cy="14.3" r="2.2" fill="#fff"/></svg>
<svg style="left:505px;top:817px" width="18" height="18" viewBox="0 0 18 18"><rect x="0" y="0" width="18" height="18" rx="2.5" fill="#9b4fe6"/><path d="M6.8 5.3L12.6 9L6.8 12.7Z" fill="#fff"/><rect x="1.5" y="2" width="2" height="2.5" fill="#4c1d95"/><rect x="1.5" y="7.7" width="2" height="2.5" fill="#4c1d95"/><rect x="1.5" y="13.5" width="2" height="2.5" fill="#4c1d95"/><rect x="14.5" y="2" width="2" height="2.5" fill="#4c1d95"/><rect x="14.5" y="7.7" width="2" height="2.5" fill="#4c1d95"/><rect x="14.5" y="13.5" width="2" height="2.5" fill="#4c1d95"/></svg>
<svg style="left:505px;top:858px" width="18" height="15" viewBox="0 0 18 15"><path d="M0 2C0 .9 .9 0 2 0H6.5L9 2.5H16C17.1 2.5 18 3.4 18 4.5V13C18 14.1 17.1 15 16 15H2C.9 15 0 14.1 0 13Z" fill="#e8b12f"/><path d="M0 5C0 4.2 .7 3.5 1.5 3.5H16.5C17.3 3.5 18 4.2 18 5V13C18 14.1 17.1 15 16 15H2C.9 15 0 14.1 0 13Z" fill="#ffd75e"/></svg>
<svg style="left:690px;top:739px" width="14" height="14" viewBox="0 0 14 14"><path d="M8.5 0.8L13.2 5.5L11.8 6.2L9.5 8.5L9 12L6 9L1 13.5L5 8L2 5L5.5 4.5L7.8 2.2Z" fill="#9aa3ad"/></svg>
<svg style="left:690px;top:779px" width="14" height="14" viewBox="0 0 14 14"><path d="M8.5 0.8L13.2 5.5L11.8 6.2L9.5 8.5L9 12L6 9L1 13.5L5 8L2 5L5.5 4.5L7.8 2.2Z" fill="#9aa3ad"/></svg>
<svg style="left:690px;top:819px" width="14" height="14" viewBox="0 0 14 14"><path d="M8.5 0.8L13.2 5.5L11.8 6.2L9.5 8.5L9 12L6 9L1 13.5L5 8L2 5L5.5 4.5L7.8 2.2Z" fill="#9aa3ad"/></svg>
<div class="a" style="left:763px;top:741px;width:104px;height:108px;background:#f6f6f6;overflow:hidden;box-shadow:0 1px 3px rgba(0,0,0,.5)"><div class="a" style="left:0;top:0;width:104px;height:9px;background:#fff;border-bottom:1px solid #555"></div><div class="a" style="left:4px;top:2px;width:4px;height:4px;background:#e8e8e8"></div><span class="t" style="left:69px;top:1.5px;font:700 2.6px/5px 'Liberation Sans',sans-serif;color:#444;letter-spacing:.1px">Home</span><span class="t" style="left:77.5px;top:1.5px;font:400 2.3px/5px 'Liberation Sans',sans-serif;color:#aaa;letter-spacing:.05px">Menu  About  Contact</span><span class="t" style="left:33.5px;top:14.5px;font:700 5.6px/9px 'Liberation Sans',sans-serif;color:#222">Eat sum more</span><span class="t" style="left:32.5px;top:23.5px;font:400 2.6px/5px 'Liberation Sans',sans-serif;color:#666">Freshly baked delights for every craving.</span><svg style="left:6px;top:30px;overflow:hidden" width="92" height="62" viewBox="0 0 92 62"><defs><linearGradient id="cg" x1="0" y1="1" x2="1" y2="0"><stop offset="0" stop-color="#1f3a68"/><stop offset=".45" stop-color="#1d2738"/><stop offset="1" stop-color="#1a1c22"/></linearGradient><filter id="bl"><feGaussianBlur stdDeviation=".45"/></filter></defs><rect width="92" height="62" fill="url(#cg)"/><g filter="url(#bl)" stroke-width="1.25" fill="none" opacity=".75"><path d="M2.0 2.1L10.0 2.6" stroke="#2fbf71" opacity="0.98"/><path d="M14.0 2.8L18.0 3.1" stroke="#b85a62" opacity="0.87"/><path d="M19.0 3.1L22.0 3.3" stroke="#58708f" opacity="0.83"/><path d="M9.0 5.7L18.0 6.4" stroke="#2fa89a" opacity="0.92"/><path d="M19.0 6.5L28.0 7.1" stroke="#2fbf71" opacity="0.83"/><path d="M29.0 7.2L32.0 7.4" stroke="#58708f" opacity="0.74"/><path d="M16.0 9.5L22.0 10.0" stroke="#2fbf71" opacity="0.85"/><path d="M24.0 10.2L29.0 10.6" stroke="#58708f" opacity="0.78"/><path d="M30.0 10.7L35.0 11.1" stroke="#2fbf71" opacity="0.73"/><path d="M37.0 11.3L41.0 11.6" stroke="#58708f" opacity="0.66"/><path d="M42.0 11.7L52.0 12.6" stroke="#2fbf71" opacity="0.62"/><path d="M56.0 12.9L66.0 13.7" stroke="#58708f" opacity="0.49"/><path d="M70.0 14.1L76.0 14.6" stroke="#b85a62" opacity="0.36"/><path d="M78.0 14.8L84.0 15.3" stroke="#2fbf71" opacity="0.29"/><path d="M87.0 15.5L91.0 15.8" stroke="#2fbf71" opacity="0.25"/><path d="M23.0 13.5L27.0 13.9" stroke="#2fbf71" opacity="0.79"/><path d="M31.0 14.3L39.0 15.0" stroke="#2fbf71" opacity="0.72"/><path d="M43.0 15.4L47.0 15.8" stroke="#b85a62" opacity="0.61"/><path d="M50.0 16.1L58.0 16.9" stroke="#58708f" opacity="0.55"/><path d="M62.0 17.3L72.0 18.2" stroke="#2fbf71" opacity="0.44"/><path d="M73.0 18.3L83.0 19.3" stroke="#2fbf71" opacity="0.34"/><path d="M12.0 15.7L19.0 16.5" stroke="#2fbf71" opacity="0.89"/><path d="M23.0 16.9L32.0 17.9" stroke="#2fbf71" opacity="0.79"/><path d="M19.0 19.8L29.0 21.0" stroke="#c8434a" opacity="0.83"/><path d="M31.0 21.2L41.0 22.4" stroke="#2fbf71" opacity="0.72"/><path d="M43.0 22.7L48.0 23.3" stroke="#2fbf71" opacity="0.61"/><path d="M50.0 23.5L60.0 24.7" stroke="#2fbf71" opacity="0.55"/><path d="M62.0 24.9L69.0 25.8" stroke="#2fbf71" opacity="0.44"/><path d="M73.0 26.3L80.0 27.1" stroke="#2fbf71" opacity="0.34"/><path d="M84.0 27.6L91.0 28.4" stroke="#2fbf71" opacity="0.25"/><path d="M26.0 24.0L31.0 24.7" stroke="#2fbf71" opacity="0.76"/><path d="M10.0 25.1L15.0 25.9" stroke="#c8434a" opacity="0.91"/><path d="M22.0 30.2L31.0 31.6" stroke="#58708f" opacity="0.80"/><path d="M34.0 32.1L42.0 33.4" stroke="#2fbf71" opacity="0.69"/><path d="M43.0 33.5L52.0 34.9" stroke="#2fa89a" opacity="0.61"/><path d="M56.0 35.5L66.0 37.1" stroke="#2fbf71" opacity="0.49"/><path d="M29.0 34.8L33.0 35.4" stroke="#2fbf71" opacity="0.74"/><path d="M37.0 36.1L45.0 37.5" stroke="#58708f" opacity="0.66"/><path d="M13.0 35.3L18.0 36.2" stroke="#58708f" opacity="0.88"/><path d="M19.0 36.4L22.0 37.0" stroke="#2fbf71" opacity="0.83"/><path d="M24.0 37.3L29.0 38.2" stroke="#2fbf71" opacity="0.78"/><path d="M32.0 38.8L40.0 40.2" stroke="#2fa89a" opacity="0.71"/><path d="M20.0 39.9L30.0 41.9" stroke="#2fa89a" opacity="0.82"/><path d="M34.0 42.6L38.0 43.4" stroke="#2fbf71" opacity="0.69"/><path d="M39.0 43.6L46.0 44.9" stroke="#2fa89a" opacity="0.65"/><path d="M48.0 45.3L54.0 46.5" stroke="#58708f" opacity="0.56"/><path d="M57.0 47.0L60.0 47.6" stroke="#b85a62" opacity="0.48"/><path d="M63.0 48.2L67.0 49.0" stroke="#2fbf71" opacity="0.43"/><path d="M70.0 49.5L75.0 50.5" stroke="#c8434a" opacity="0.36"/><path d="M77.0 50.9L85.0 52.4" stroke="#2fbf71" opacity="0.30"/><path d="M87.0 52.8L91.0 53.6" stroke="#b85a62" opacity="0.25"/><path d="M32.0 45.7L38.0 47.0" stroke="#2fbf71" opacity="0.71"/><path d="M42.0 47.8L45.0 48.4" stroke="#2fbf71" opacity="0.62"/><path d="M48.0 49.0L54.0 50.2" stroke="#2fbf71" opacity="0.56"/><path d="M57.0 50.8L65.0 52.5" stroke="#c8434a" opacity="0.48"/><path d="M66.0 52.7L72.0 53.9" stroke="#2fa89a" opacity="0.40"/><path d="M74.0 54.3L84.0 56.3" stroke="#58708f" opacity="0.33"/><path d="M85.0 56.5L91.0 57.8" stroke="#b85a62" opacity="0.25"/><path d="M39.0 50.7L43.0 51.6" stroke="#2fa89a" opacity="0.65"/><path d="M45.0 52.0L50.0 53.1" stroke="#2fa89a" opacity="0.59"/><path d="M23.0 50.6L32.0 52.7" stroke="#2fa89a" opacity="0.54"/><path d="M36.0 53.6L40.0 54.5" stroke="#2fbf71" opacity="0.42"/><path d="M42.0 55.0L47.0 56.1" stroke="#2fbf71" opacity="0.37"/><path d="M49.0 56.6L59.0 58.9" stroke="#b85a62" opacity="0.30"/><path d="M61.0 59.3L71.0 61.6" stroke="#2fbf71" opacity="0.25"/><path d="M74.0 62.3L79.0 63.4" stroke="#2fbf71" opacity="0.25"/><path d="M80.0 63.6L84.0 64.6" stroke="#58708f" opacity="0.25"/><path d="M86.0 65.0L91.0 66.1" stroke="#b85a62" opacity="0.25"/><path d="M30.0 55.7L36.0 57.1" stroke="#c8434a" opacity="0.48"/><path d="M38.0 57.6L46.0 59.5" stroke="#c8434a" opacity="0.40"/><path d="M50.0 60.5L53.0 61.2" stroke="#2fbf71" opacity="0.30"/><path d="M56.0 61.9L65.0 64.1" stroke="#b85a62" opacity="0.25"/><path d="M67.0 64.6L70.0 65.3" stroke="#b85a62" opacity="0.25"/><path d="M74.0 66.3L77.0 67.0" stroke="#b85a62" opacity="0.25"/><path d="M79.0 67.5L89.0 69.9" stroke="#58708f" opacity="0.25"/><path d="M42.0 62.2L50.0 64.2" stroke="#2fbf71" opacity="0.37"/><path d="M54.0 65.2L58.0 66.2" stroke="#58708f" opacity="0.26"/><path d="M59.0 66.5L66.0 68.2" stroke="#2fbf71" opacity="0.25"/><path d="M67.0 68.5L70.0 69.2" stroke="#b85a62" opacity="0.25"/><path d="M71.0 69.5L77.0 71.0" stroke="#2fbf71" opacity="0.25"/><path d="M80.0 71.8L90.0 74.3" stroke="#58708f" opacity="0.25"/></g><path d="M60 62L92 40V62Z" fill="#14161b" opacity=".7"/></svg></div>
<div class="a" style="left:902px;top:760px;width:108px;height:89px;background:#f5f5f5;overflow:hidden;box-shadow:0 1px 3px rgba(0,0,0,.5)"><div class="a" style="left:0;top:0;width:108px;height:8px;background:#fff;border-bottom:1px solid #555"></div><div class="a" style="left:4px;top:2px;width:4px;height:4px;background:#e8e8e8"></div><span class="t" style="left:72px;top:1.5px;font:400 2.3px/5px 'Liberation Sans',sans-serif;color:#aaa;letter-spacing:.05px">Home  Menu  About</span><span class="t" style="left:96px;top:1.5px;font:700 2.3px/5px 'Liberation Sans',sans-serif;color:#444;letter-spacing:.1px">Contact</span><span class="t" style="left:3px;top:14.5px;font:700 3.8px/6px 'Liberation Sans',sans-serif;color:#222">Contact Us</span><span class="t" style="left:3px;top:20px;font:400 2.2px/4px 'Liberation Sans',sans-serif;color:#666">Phone: +1 (555) 123-4567</span><span class="t" style="left:3px;top:24px;font:400 2.2px/4px 'Liberation Sans',sans-serif;color:#222">Email: info@eatsummore.com</span><span class="t" style="left:3px;top:28px;font:400 2.2px/4px 'Liberation Sans',sans-serif;color:#aaa">Hours: Mon - Fri 9 - 5</span></div>
<svg style="left:0;top:0" width="1572" height="892" viewBox="0 0 1572 892"><path d="M593 400.5L743.75 692" stroke="#e21b1b" stroke-width="7.5" fill="none"/><path d="M758 719.5L730 699L757.5 685Z" fill="#e21b1b"/><path d="M608 391.5L917.5 707.45" stroke="#e21b1b" stroke-width="7.5" fill="none"/><path d="M938.5 729.7L906 718.2L929 696.7Z" fill="#e21b1b"/></svg>

</body></html>
